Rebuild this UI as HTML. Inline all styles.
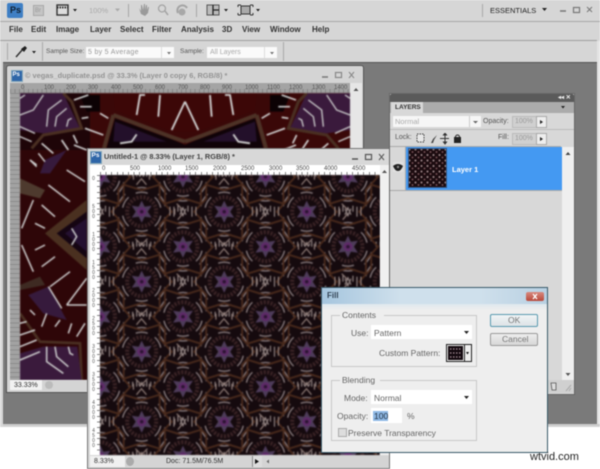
<!DOCTYPE html>
<html><head><meta charset="utf-8">
<style>
html,body{margin:0;padding:0;background:#fff;width:600px;height:469px;overflow:hidden}
#r{position:relative;width:600px;height:469px;overflow:hidden;filter:blur(.4px);font-family:"Liberation Sans",sans-serif;color:#222}
.a{position:absolute}
.t{position:absolute;white-space:nowrap;line-height:1}
.m{font-size:8px;font-weight:bold;top:26px;color:#333}
.r1{font-size:6px;color:#555;top:85px}
.r2{font-size:6px;color:#444;top:166px}
.v{position:absolute;left:91px;font-size:5px;line-height:5px;width:5px;text-align:center;color:#555}
</style></head><body><div id="r">
<!-- app -->
<div class="a" style="left:0;top:0;width:600px;height:427px;background:#d6d6d6"></div>
<div class="a" style="left:3px;top:62px;width:594px;height:362px;background:#7a7a7a;border-top:1px solid #555"></div>
<div class="a" style="left:0;top:21px;width:600px;height:1px;background:#a8a8a8"></div>
<div class="a" style="left:0;top:40px;width:597px;height:1px;background:#a0a0a0"></div>
<div class="a" style="left:597px;top:41px;width:3px;height:385px;background:#e4e4e4"></div>
<div class="a" style="left:0;top:424px;width:600px;height:2px;background:#ccc"></div>
<div class="a" style="left:0;top:41px;width:3px;height:385px;background:#d8d8d8"></div>
<!-- top bar -->
<div class="a" style="left:7px;top:3px;width:16px;height:15px;background:#3f7fc4;border-radius:2px"></div>
<div class="t" style="left:10px;top:6px;font-size:9px;font-weight:bold;color:#123">Ps</div>
<div class="a" style="left:33px;top:5px;width:11px;height:11px;background:#c4c4c4;border:1px solid #a8a8a8;box-sizing:border-box"></div>
<div class="t" style="left:35px;top:8px;font-size:6px;color:#999">Br</div>
<svg class="a" style="left:0;top:0" width="300" height="22">
<rect x="57" y="5" width="11" height="10" fill="#ddd" stroke="#333" stroke-width="1.4"/><path d="M57 7.5h11" stroke="#333" stroke-width="2" stroke-dasharray="1.5 1"/>
<path d="M73 9h4l-2 2.500zM224 9h4l-2 2.500zM256 9h4l-2 2.500z" fill="#222"/><path d="M115 8.500h5l-2.500 3z" fill="#aaa"/>
<path d="M128.500 4v13M196.500 4v13" stroke="#a6a6a6"/>
<path d="M139 8l2 6 4 2 3-3 1-6-1 0-1 3 0-5-1 0-1 5 0-6-1 0-1 6-1-5-1 0 0 6z" fill="#9a9a9a"/>
<circle cx="162" cy="8.500" r="3.500" fill="none" stroke="#a4a4a4" stroke-width="1.300"/><path d="M165 11l3 4" stroke="#a4a4a4" stroke-width="1.500"/>
<path d="M178 13a5 5 0 0 1 9-5" fill="none" stroke="#a4a4a4" stroke-width="2"/><circle cx="182" cy="12" r="3.500" fill="#a8a8a8"/>
<rect x="207" y="5" width="12" height="10" fill="#bbb" stroke="#555"/><path d="M213 5v10M213 10h6" stroke="#222" stroke-width="1.300"/>
<rect x="241" y="6" width="9" height="8" fill="#aaa" stroke="#333"/><path d="M238 5h3M250 5h3M238 15h3M250 15h3M238 5v2M253 5v2M238 13v2M253 13v2" stroke="#333"/>
</svg>
<div class="t" style="left:89px;top:7px;font-size:7.500px;color:#aaa">100%</div>
<div class="a" style="left:482px;top:4px;width:1px;height:13px;background:#aaa"></div>
<div class="t" style="left:490px;top:6.500px;font-size:7.500px;color:#222">ESSENTIALS</div>
<svg class="a" style="left:535px;top:0" width="65" height="22"><path d="M7 8h5l-2.500 3z" fill="#222"/><path d="M25 11h6" stroke="#777" stroke-width="1.500"/><rect x="38.500" y="7.500" width="6" height="5" fill="none" stroke="#777" stroke-width="1.200"/><path d="M52 7l5 5M57 7l-5 5" stroke="#777"/></svg>
<!-- menu -->
<span class="t m" style="left:9px">File</span><span class="t m" style="left:31px">Edit</span><span class="t m" style="left:56px">Image</span><span class="t m" style="left:90px">Layer</span><span class="t m" style="left:120px">Select</span><span class="t m" style="left:152px">Filter</span><span class="t m" style="left:181px">Analysis</span><span class="t m" style="left:222px">3D</span><span class="t m" style="left:242px">View</span><span class="t m" style="left:270px">Window</span><span class="t m" style="left:312px">Help</span>
<!-- options -->
<div class="a" style="left:7px;top:43px;width:1px;height:17px;background:#aaa"></div>
<div class="a" style="left:42px;top:42px;width:1px;height:19px;background:#aaa"></div>
<div class="a" style="left:283px;top:42px;width:1px;height:19px;background:#aaa"></div>
<svg class="a" style="left:14px;top:44px" width="24" height="14"><path d="M2 13l7-8" stroke="#333" stroke-width="1.500"/><path d="M7 5l4-3 2 2-3 4z" fill="#222"/><path d="M18 7h4l-2 2.500z" fill="#222"/></svg>
<div class="t" style="left:46px;top:49px;font-size:6.500px;color:#555">Sample Size:</div>
<div class="a" style="left:86px;top:47px;width:88px;height:11px;background:#fafafa"></div>
<div class="a" style="left:161px;top:47px;width:1px;height:11px;background:#ddd"></div>
<div class="t" style="left:88px;top:49px;font-size:7px;color:#999;letter-spacing:.3px">5 by 5 Average</div>
<div class="t" style="left:180px;top:49px;font-size:6.500px;color:#555">Sample:</div>
<div class="a" style="left:207px;top:47px;width:70px;height:11px;background:#fafafa"></div>
<div class="a" style="left:264px;top:47px;width:1px;height:11px;background:#ddd"></div>
<div class="t" style="left:210px;top:49px;font-size:7px;color:#aaa">All Layers</div>
<svg class="a" style="left:165px;top:50px" width="110" height="6"><path d="M2 2h4l-2 2.500zM105 2h4l-2 2.500z" fill="#777"/></svg>

<!-- left doc -->
<div class="a" style="left:7px;top:66px;width:356px;height:326px;background:#d4d4d4;border-radius:2px 2px 0 0;box-shadow:0 0 0 1px #555"></div>
<div class="a" style="left:11px;top:70px;width:10px;height:10px;background:#2f66a8;border:1px solid #8ab"></div>
<div class="t" style="left:12.500px;top:72px;font-size:6px;font-weight:bold;color:#fff">Ps</div>
<div class="t" style="left:25px;top:71.500px;font-size:7.400px;font-weight:bold;color:#949494">© vegas_duplicate.psd @ 33.3% (Layer 0 copy 6, RGB/8) *</div>
<svg class="a" style="left:320px;top:68px" width="40" height="14"><path d="M2 9h6" stroke="#777" stroke-width="1.500"/><rect x="15.500" y="4.500" width="6" height="5" fill="none" stroke="#888" stroke-width="1.200"/><path d="M29 4l5 6M34 4l-5 6" stroke="#888"/></svg>
<div class="a" style="left:10px;top:83px;width:340px;height:10px;background:repeating-linear-gradient(90deg,#888 0,#888 1px,#a0a0a0 1px,#a0a0a0 4.500px)"></div>
<div class="a" style="left:10px;top:83px;width:340px;height:6px;background:#a4a4a4"></div>
<div class="a" style="left:10px;top:93px;width:10px;height:287px;background:repeating-linear-gradient(180deg,#8c8c8c 0,#8c8c8c 1px,#a2a2a2 1px,#a2a2a2 4.500px)"></div>
<span class="t r1" style="left:21px">0</span><span class="t r1" style="left:44px">100</span><span class="t r1" style="left:66px">200</span><span class="t r1" style="left:88px">300</span><span class="t r1" style="left:111px">400</span><span class="t r1" style="left:133px">500</span><span class="t r1" style="left:155px">600</span><span class="t r1" style="left:178px">700</span><span class="t r1" style="left:200px">800</span><span class="t r1" style="left:222px">900</span><span class="t r1" style="left:245px">1000</span><span class="t r1" style="left:267px">1100</span><span class="t r1" style="left:289px">1200</span><span class="t r1" style="left:312px">1300</span><span class="t r1" style="left:334px">1400</span>
<div class="a" style="left:350px;top:83px;width:12px;height:297px;background:#e6e6e6"></div>
<svg class="a" style="left:350px;top:85px" width="12" height="10"><path d="M6 3l-2.500 3h5z" fill="#555"/></svg>
<svg class="a" style="left:20px;top:93px;filter:blur(.4px)" width="330" height="287" viewBox="20 93 330 287">
<rect x="20" y="93" width="330" height="287" fill="#1e0508"/>
<rect x="90" y="93" width="260" height="60" fill="#3a0808"/>
<rect x="20" y="150" width="70" height="230" fill="#2e0608"/>
<g id="top" transform="translate(0,85) scale(.33333)">
 <polygon points="60,25 190,25 240,130 130,145 60,135" fill="#3a1a3c"/>
 <path d="M190 25L215 50L245 130L130 150L95 190" fill="none" stroke="#4a2f22" stroke-width="9"/>
 <path d="M60 40L75 30M60 90L100 75L130 30M60 125L105 145M60 155L95 170" fill="none" stroke="#ccc" stroke-width="4"/>
 <path d="M140 125L145 75L185 45M165 125L170 95L200 70M200 125L205 105L215 100" fill="none" stroke="#ccc" stroke-width="4"/>
 <path d="M240 30H300V80H260z" fill="#0c0204"/>
 <path d="M222 45L265 30M240 65L275 65M245 100L265 97M255 130L310 150M300 85L325 100M365 75V45M222 180L260 195M185 165L205 195M220 150L232 175M125 175L160 205M90 225L110 240" fill="none" stroke="#d0d0d0" stroke-width="5"/>
 <path d="M340 25H555V140L520 140L345 75z" fill="#3c0707"/>
 <path d="M345 100L520 165L555 180V190H320z" fill="#100308"/>
 <path d="M345 110L500 170L340 170z" fill="#23102a"/>
 <path d="M340 90L520 158L555 170M340 90L312 190" fill="none" stroke="#4d3226" stroke-width="12"/>
 <path d="M360 175L395 170L410 148M410 90L420 30L435 30M475 95L480 30M515 135L555 50" fill="none" stroke="#d4d4d4" stroke-width="5.500"/>
</g>
<g transform="translate(370,0) scale(-1,1)">
 <use href="#top"/>
</g>
<g transform="translate(0,150) scale(.33333)">
 <polygon points="260,150 135,250 260,360" fill="#4a3020"/>
 <polygon points="260,185 170,250 260,325" fill="#150512"/>
 <polygon points="260,205 195,250 260,305" fill="#241030"/>
 <polygon points="60,85 135,120 120,145 60,130" fill="#4e3a2e"/>
 <polygon points="60,420 135,405 120,380 60,405" fill="#3e2a22"/>
 <polygon points="120,70 135,30 200,0 150,70" fill="#361a3c"/>
 <polygon points="85,435 145,410 200,510 130,490" fill="#361a3c"/>
 <path d="M60 490L120 575L240 580L245 690" fill="none" stroke="#4a2f22" stroke-width="8"/>
 <polygon points="60,610 130,590 232,590 245,690 60,690" fill="#3a1a3c"/>
 <path d="M90 30L110 50M115 10L135 35M145 105L210 155M200 60L255 95M125 165L165 200M65 235L100 150M105 220L135 235M105 300L135 285M65 285L100 365M125 350L165 320M150 410L210 365M200 465L260 385M200 465L260 465M145 410L185 475M60 520L80 515M60 555L105 540M60 590L110 570M60 630L120 605M140 590L140 635L190 670M165 590L170 620L205 650M205 590L210 610L220 615M90 480L105 495M125 530L140 490M165 530L180 510M205 550L215 520M230 560L255 520M215 235L230 260L215 285" fill="none" stroke="#cfcfcf" stroke-width="4.500"/>
</g>
</svg>
<div class="a" style="left:10px;top:380px;width:352px;height:10px;background:#d4d4d4"></div>
<div class="a" style="left:10px;top:380px;width:32px;height:10px;background:#f2f2f2"></div>
<div class="t" style="left:14px;top:381.500px;font-size:7px;color:#333">33.33%</div>
<div class="a" style="left:45px;top:381px;width:8px;height:8px;background:#bbb;border-radius:50%"></div>

<!-- front doc -->
<div class="a" style="left:88px;top:149px;width:301px;height:319px;background:#d8d8d8;box-shadow:0 0 0 1px #777"></div>
<div class="a" style="left:90px;top:151px;width:10px;height:11px;background:#2f66a8;border:1px solid #8ab"></div>
<div class="t" style="left:91.500px;top:153px;font-size:6.500px;font-weight:bold;color:#fff">Ps</div>
<div class="t" style="left:104px;top:152.500px;font-size:7.400px;font-weight:bold;color:#444">Untitled-1 @ 8.33% (Layer 1, RGB/8) *</div>
<svg class="a" style="left:350px;top:150px" width="40" height="14"><path d="M2 9h6" stroke="#555" stroke-width="1.500"/><rect x="15.500" y="4.500" width="6" height="5" fill="none" stroke="#555" stroke-width="1.200"/><path d="M29 4l5 6M34 4l-5 6" stroke="#555"/></svg>
<div class="a" style="left:90px;top:165px;width:290px;height:10px;background:#fff"></div>
<div class="a" style="left:100px;top:172px;width:280px;height:3px;background:repeating-linear-gradient(90deg,#888 0,#888 1px,#fff 1px,#fff 5.600px)"></div>
<div class="a" style="left:90px;top:175px;width:10px;height:280px;background:#fff"></div>
<div class="a" style="left:97px;top:175px;width:3px;height:280px;background:repeating-linear-gradient(180deg,#888 0,#888 1px,#fff 1px,#fff 5.600px)"></div>
<span class="t r2" style="left:102px">0</span><span class="t r2" style="left:130px">500</span><span class="t r2" style="left:158px">1000</span><span class="t r2" style="left:185px">1500</span><span class="t r2" style="left:213px">2000</span><span class="t r2" style="left:241px">2500</span><span class="t r2" style="left:269px">3000</span><span class="t r2" style="left:296px">3500</span><span class="t r2" style="left:324px">4000</span><span class="t r2" style="left:352px">4500</span>
<div class="v" style="top:177px">0</div><div class="v" style="top:205px">5<br>0<br>0</div><div class="v" style="top:233px">1<br>0<br>0<br>0</div><div class="v" style="top:261px">1<br>5<br>0<br>0</div><div class="v" style="top:289px">2<br>0<br>0<br>0</div><div class="v" style="top:317px">2<br>5<br>0<br>0</div><div class="v" style="top:345px">3<br>0<br>0<br>0</div><div class="v" style="top:373px">3<br>5<br>0<br>0</div><div class="v" style="top:401px">4<br>0<br>0<br>0</div><div class="v" style="top:429px">4<br>5<br>0<br>0</div>
<svg class="a" style="left:100px;top:175px;filter:blur(.45px)" width="280" height="280" viewBox="100 175 280 280">
<defs>
<g id="st"><path d="M-6 -18.500Q0 -20.500 6 -18.500M-7 -23Q0 -25.500 7 -23" fill="none" stroke="#8f8284" stroke-width="1.300"/></g>
<g id="cell">
 <circle r="14.500" fill="none" stroke="#3c2426" stroke-width="4" stroke-dasharray="2 1.500"/>
 <path d="M0 -11L3 -5L10 -6L6 0L10 6L3 5L0 11L-3 5L-10 6L-6 0L-10 -6L-3 -5Z" fill="#4e3c5a"/>
 <circle r="4.500" fill="#5e2a68"/><circle r="1.800" fill="#2c1432"/>
 <use href="#st" transform="rotate(0)"/><use href="#st" transform="rotate(60)"/><use href="#st" transform="rotate(120)"/><use href="#st" transform="rotate(180)"/><use href="#st" transform="rotate(240)"/><use href="#st" transform="rotate(300)"/>
 <path d="M-18 -27L0 -21.500L18 -27L18 -13L30 0L18 13L18 27L0 21.500L-18 27L-18 13L-30 0L-18 -13Z" fill="none" stroke="#4a2a1c" stroke-width="1.800"/>
 <path d="M-13 30v9M-9 30v10M-5 29v6M5 29v6M9 30v10M13 30v9M-3 38L0 31L3 38M-3 32L0 39L3 32" fill="none" stroke="#9a8c8a" stroke-width="1.100"/>
 <path d="M35 -8L41 -2L47 -8M36 8L41 2L46 8M33 -3V3M49 -3V3" fill="none" stroke="#94807a" stroke-width="1.200"/>
</g>
<pattern id="p" width="82.500" height="70" patternUnits="userSpaceOnUse" patternTransform="translate(100.450,176.700)">
 <rect width="82.500" height="70" fill="#150a0e"/>
 <use href="#cell" x="41.250" y="35"/>
 <use href="#cell" x="0" y="0"/><use href="#cell" x="82.500" y="0"/><use href="#cell" x="0" y="70"/><use href="#cell" x="82.500" y="70"/>
</pattern>
</defs>
<rect x="100" y="175" width="280" height="280" fill="url(#p)"/>
</svg>
<div class="a" style="left:380px;top:165px;width:9px;height:290px;background:#f0f0f0"></div>
<svg class="a" style="left:380px;top:168px" width="9" height="8"><path d="M4.500 2l-2.500 3h5z" fill="#555"/></svg>
<div class="a" style="left:90px;top:456px;width:299px;height:11px;background:#d4d4d4"></div>
<div class="a" style="left:90px;top:456px;width:35px;height:11px;background:#f0f0f0"></div>
<div class="t" style="left:94px;top:458px;font-size:7px;color:#333">8.33%</div>
<div class="a" style="left:126px;top:457px;width:8px;height:9px;background:#aaa;border-radius:50%"></div>
<div class="t" style="left:166px;top:458px;font-size:7px;color:#333">Doc: 71.5M/76.5M</div>
<div class="a" style="left:252px;top:456px;width:9px;height:11px;background:#ddd;border-left:1px solid #888"></div>
<svg class="a" style="left:252px;top:456px" width="20" height="11"><path d="M3 3l4 2.500-4 2.500z" fill="#111"/><path d="M17 3.500l-2.500 2 2.500 2z" fill="#666"/></svg>

<!-- layers panel -->
<div class="a" style="left:390px;top:94px;width:184px;height:300px;background:#d8d8d8;box-shadow:0 0 0 1px #666"></div>
<div class="a" style="left:390px;top:94px;width:184px;height:8px;background:#5a5a5a;border-radius:2px 2px 0 0"></div>
<div class="t" style="left:558px;top:95px;font-size:6px;color:#eee;font-weight:bold">◂◂ ✕</div>
<div class="a" style="left:390px;top:102px;width:184px;height:11px;background:#ababab"></div>
<div class="a" style="left:391px;top:102px;width:32px;height:12px;background:#d8d8d8"></div>
<div class="t" style="left:395px;top:104.500px;font-size:6.500px;font-weight:bold;color:#333">LAYERS</div>
<svg class="a" style="left:560px;top:105px" width="12" height="6"><path d="M1 1h4l-2 2.500z" fill="#222"/></svg>
<div class="a" style="left:393px;top:116px;width:88px;height:11px;background:#f6f6f6"></div>
<div class="t" style="left:395px;top:118px;font-size:7.500px;color:#aaa">Normal</div>
<div class="a" style="left:469px;top:116px;width:1px;height:11px;background:#ccc"></div>
<svg class="a" style="left:472px;top:120px" width="8" height="5"><path d="M1 1h5l-2.500 2.500z" fill="#666"/></svg>
<div class="t" style="left:483px;top:118px;font-size:7px;color:#555">Opacity:</div>
<div class="a" style="left:512px;top:116px;width:24px;height:10px;background:#d0d0d0;border:1px solid #bbb"></div>
<div class="t" style="left:515px;top:118px;font-size:7px;color:#999">100%</div>
<div class="a" style="left:536px;top:116px;width:9px;height:10px;background:#eee;border:1px solid #aaa"></div>
<svg class="a" style="left:536px;top:116px" width="10" height="12"><path d="M4 4l3 2-3 2z" fill="#222"/></svg>
<div class="a" style="left:390px;top:129px;width:184px;height:1px;background:#bbb"></div>
<div class="t" style="left:395px;top:134px;font-size:7px;color:#555">Lock:</div>
<svg class="a" style="left:415px;top:133px" width="50" height="13"><rect x="2" y="1" width="7" height="8" fill="#e8e8e8" stroke="#444" stroke-dasharray="1.500 1"/><path d="M16 10l2-4 4-4-3 5-1 3z" fill="#444"/><path d="M30 1v9M25 5.500h9M30 0l-1.500 2h3zM30 11l-1.500-2h3z" stroke="#333" fill="#333"/><rect x="39" y="4" width="7" height="6" fill="#222"/><path d="M40.500 4a2 2 0 0 1 4 0" fill="none" stroke="#222"/></svg>
<div class="t" style="left:498px;top:134px;font-size:7px;color:#555">Fill:</div>
<div class="a" style="left:512px;top:133px;width:24px;height:10px;background:#d0d0d0;border:1px solid #bbb"></div>
<div class="t" style="left:515px;top:135px;font-size:7px;color:#999">100%</div>
<div class="a" style="left:536px;top:133px;width:9px;height:10px;background:#eee;border:1px solid #aaa"></div>
<svg class="a" style="left:536px;top:133px" width="10" height="12"><path d="M4 4l3 2-3 2z" fill="#222"/></svg>
<div class="a" style="left:390px;top:146px;width:171px;height:1px;background:#aaa"></div>
<div class="a" style="left:406px;top:147px;width:156px;height:43px;background:#4499f2"></div>
<div class="a" style="left:390px;top:190px;width:172px;height:1px;background:#aaa"></div>
<div class="a" style="left:405px;top:147px;width:1px;height:43px;background:#aaa"></div>
<div class="a" style="left:393px;top:162px;width:10px;height:10px;background:#e0e0e0"></div>
<svg class="a" style="left:393px;top:163px" width="11" height="9"><path d="M0 3Q5 -1 10 3Q8 8 5 8Q2 8 0 3z" fill="#222"/><circle cx="5" cy="4" r="1.200" fill="#888"/></svg>
<svg class="a" style="left:408px;top:148px" width="39" height="40"><defs><pattern id="q" width="6" height="5.500" patternUnits="userSpaceOnUse"><rect width="6" height="5.500" fill="#1c0c10"/><circle cx="1.500" cy="1.500" r="1.100" fill="#8a7476"/><circle cx="4.500" cy="4" r="1" fill="#6e4a50"/></pattern></defs><rect x=".5" y=".5" width="38" height="39" fill="url(#q)" stroke="#345a88"/></svg>
<div class="t" style="left:452px;top:165.500px;font-size:7.500px;font-weight:bold;color:#fff">Layer 1</div>
<div class="a" style="left:562px;top:147px;width:12px;height:236px;background:#efefef"></div>
<svg class="a" style="left:562px;top:150px" width="12" height="8"><path d="M6 2l-2.500 3h5z" fill="#444"/></svg>
<svg class="a" style="left:562px;top:370px" width="12" height="8"><path d="M3.500 3h5l-2.500 3z" fill="#555"/></svg>
<div class="a" style="left:547px;top:380px;width:27px;height:13px;background:#d0d0d0"></div>
<svg class="a" style="left:549px;top:381px" width="25" height="11"><path d="M2 2h5v7H3z" fill="#ddd" stroke="#555" stroke-width=".8"/><path d="M22 4l-5 6M22 7l-2 3" stroke="#aaa"/></svg>

<!-- dialog -->
<div class="a" style="left:322px;top:288px;width:225px;height:164px;background:#eeeeee;box-shadow:0 0 0 1px #3a5a6a"></div>
<div class="a" style="left:322px;top:288px;width:225px;height:16px;background:linear-gradient(90deg,#a5c5de,#cfe0ec 35%,#cfe0ec 70%,#b8d0e2)"></div>
<div class="a" style="left:322px;top:304px;width:225px;height:6px;background:linear-gradient(#dfe8ee,#eee)"></div>
<div class="t" style="left:327px;top:292px;font-size:8px;font-weight:bold;color:#345">Fill</div>
<div class="a" style="left:526px;top:292px;width:18px;height:9px;background:linear-gradient(#d88a80,#b8483a);border-radius:2px"></div>
<svg class="a" style="left:526px;top:292px" width="18" height="9"><path d="M7 2l4 5M11 2l-4 5" stroke="#fff" stroke-width="1.300"/></svg>
<div class="a" style="left:331px;top:315px;width:146px;height:52px;box-sizing:border-box;border:1px solid #c8c8c8"></div>
<div class="a" style="left:340px;top:310px;width:44px;height:10px;background:#eee"></div>
<div class="t" style="left:342px;top:311px;font-size:8.500px;color:#666">Contents</div>
<div class="t" style="left:351px;top:329px;font-size:8.500px;color:#666">Use:</div>
<div class="a" style="left:371px;top:325px;width:101px;height:14px;background:#fff"></div>
<div class="t" style="left:374px;top:329px;font-size:8.500px;color:#666">Pattern</div>
<svg class="a" style="left:463px;top:330px" width="8" height="5"><path d="M1 1h5l-2.500 3z" fill="#222"/></svg>
<div class="t" style="left:379px;top:349px;font-size:8.500px;color:#666">Custom Pattern:</div>
<div class="a" style="left:446px;top:344px;width:26px;height:18px;box-sizing:border-box;background:#eee;border:1px solid #222"></div>
<svg class="a" style="left:447px;top:345px" width="24" height="16"><rect x="1" y="1" width="15" height="14" fill="#140a10"/><path d="M3 4h11M3 8h11M3 12h11" stroke="#a89098" stroke-width="1.300" stroke-dasharray="1.500 1.500"/><path d="M17.500 0v16" stroke="#222"/><path d="M19 7h3l-1.500 2.500z" fill="#111"/></svg>
<div class="a" style="left:331px;top:380px;width:146px;height:61px;box-sizing:border-box;border:1px solid #c8c8c8"></div>
<div class="a" style="left:340px;top:375px;width:40px;height:10px;background:#eee"></div>
<div class="t" style="left:342px;top:376px;font-size:8.500px;color:#666">Blending</div>
<div class="t" style="left:344px;top:394px;font-size:8.500px;color:#666">Mode:</div>
<div class="a" style="left:371px;top:390px;width:101px;height:14px;background:#fff"></div>
<div class="t" style="left:374px;top:394px;font-size:8.500px;color:#666">Normal</div>
<svg class="a" style="left:463px;top:395px" width="8" height="5"><path d="M1 1h5l-2.500 3z" fill="#222"/></svg>
<div class="t" style="left:337px;top:412px;font-size:8.500px;color:#666">Opacity:</div>
<div class="a" style="left:371px;top:408px;width:31px;height:15px;background:#fff"></div>
<div class="a" style="left:373px;top:411px;width:15px;height:10px;background:#8fb8e4"></div>
<div class="t" style="left:374px;top:412px;font-size:8.500px;color:#234">100</div>
<div class="t" style="left:407px;top:412px;font-size:8.500px;color:#666">%</div>
<div class="a" style="left:338px;top:428px;width:9px;height:9px;box-sizing:border-box;background:#ddd;border:1px solid #aaa"></div>
<div class="t" style="left:348px;top:429px;font-size:8.500px;color:#666">Preserve Transparency</div>
<div class="a" style="left:490px;top:314px;width:48px;height:13px;box-sizing:border-box;background:linear-gradient(#f0f4f6,#dde3e6);border:1px solid #5a9ab0;border-radius:2px"></div>
<div class="t" style="left:508px;top:316px;font-size:8.500px;color:#777">OK</div>
<div class="a" style="left:490px;top:333px;width:48px;height:13px;box-sizing:border-box;background:linear-gradient(#eee,#d8d8d8);border:1px solid #999;border-radius:2px"></div>
<div class="t" style="left:502px;top:335px;font-size:8.500px;color:#777">Cancel</div>

<div class="t" style="left:530px;top:452px;font-size:11px;color:#222">wtvid.com</div>
</div></body></html>
